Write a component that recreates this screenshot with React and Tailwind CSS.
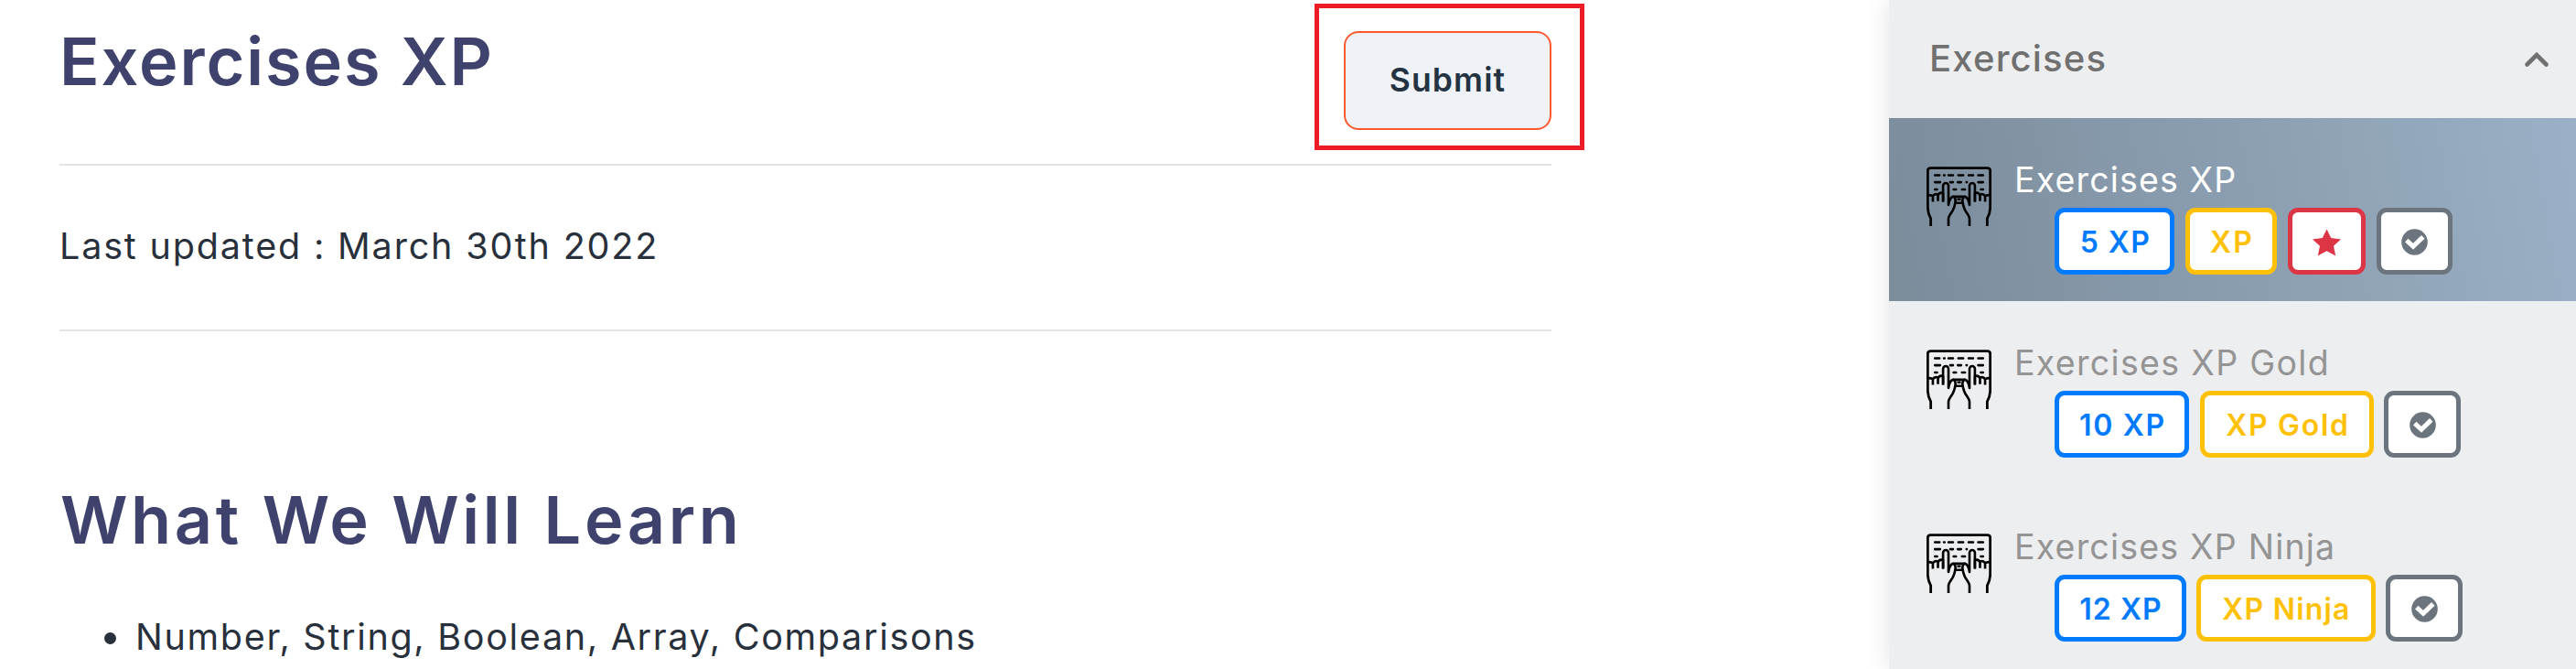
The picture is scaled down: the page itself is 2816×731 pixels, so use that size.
function TypingIcon() {
  return (
    <svg className="h-[65px] w-[71px] shrink-0" viewBox="0 0 216 198" fill="none" stroke="#000" strokeWidth="8" strokeLinejoin="round">
      <path d="M14 198V173Q5 158 4 138V14Q4 5 13 5H203Q212 5 212 14V138Q211 158 202 173V198" strokeWidth="8.5" />
      <path d="M73 198V173Q74 166 82 154Q92 142 96 118" />
      <path d="M143 198V173Q142 166 134 154Q124 142 120 118" />
      <path d="M4 95Q12 94 21 98V117M21 100Q24 89 38 93V115M38 96Q42 84 55 88V114" />
      <path d="M212 95Q204 94 195 98V117M195 100Q192 89 178 93V115M178 96Q174 84 161 88V114" />
      <path d="M55 118V64A9 9 0 0 1 73 64V128Q76 105 88 100H128Q140 105 143 128V64A9 9 0 0 1 161 64V118" />
      <path d="M88 100Q98 102 96 122M128 100Q118 102 120 122M95 121H121M102 109H114" />
      <g strokeWidth="8" strokeLinecap="round">
        <path d="M28 29H43M58 29H60M73 29H88M106 29H122M140 29H155M172 29H188" />
        <path d="M28 52H45M79 52H88M104 52H115M133 52H134M172 52H188" />
        <path d="M28 76H35M90 76H98M118 76H128M181 76H188" />
      </g>
    </svg>
  );
}

function Star() {
  return (
    <svg className="h-[30px] w-[31px]" viewBox="0 0 31 30" fill="#dc3545">
      <path d="M15.5 .5 20.2 10 31 11.4 23 18.8 25.2 29.5 15.5 24.3 5.8 29.5 8 18.8 0 11.4 10.8 10Z" />
    </svg>
  );
}

function Check() {
  return (
    <svg className="size-[29px]" viewBox="0 0 29 29">
      <circle cx="14.5" cy="14.5" r="14.3" fill="#6c757d" />
      <path d="M7.6 14.4 13 19.4 22 10.6" fill="none" stroke="#fff" strokeWidth="5" strokeLinecap="square" strokeLinejoin="miter" />
    </svg>
  );
}

function Badge({ className, children }) {
  return (
    <span className={`box-border flex h-[73px] shrink-0 items-center justify-center rounded-[11px] border-5 bg-white pt-[2px] text-[32px] font-semibold leading-none whitespace-nowrap ${className}`}>
      {children}
    </span>
  );
}

function Row({ active, title, titleClass, children }) {
  return (
    <li className={`flex items-start pl-[41px] pt-[53px] ${active ? "h-[200px] bg-[linear-gradient(80deg,#7b8c9b_0%,#8395a5_25%,#8a9db0_48%,#91a5b6_70%,#93a7bc_76%,#9bb0c6_100%)] text-white" : "h-[201px] text-[#949494]"}`}>
      <TypingIcon />
      <div className="ml-[25px]">
        <div className={`h-[46px] -mt-[8px] text-[37.5px] font-normal leading-[46px] whitespace-nowrap ${titleClass}`}>{title}</div>
        <div className="mt-[7px] ml-[44px] flex">{children}</div>
      </div>
    </li>
  );
}

export default function App() {
  return (
    <div className="flex h-[731px] w-[2816px] overflow-hidden bg-white font-['Inter',sans-serif]">
      <main className="w-[2065px] shrink-0 pl-[65px] text-[#28303c]">
        <header className="flex h-[179px] w-[1667px] justify-between">
          <h1 className="pt-[31px] text-[72px] font-semibold leading-[72px] tracking-[1.95px] text-[#3f426d]">Exercises XP</h1>
          <div className="mt-[4px] box-border h-[160px] w-[295px] border-5 border-[#ed1c24] pt-[25px] pl-[27px]">
            <button className="flex h-[108px] w-[227px] items-center justify-center rounded-[16px] border-2 border-[#ff5a30] bg-[#eff2f7] text-[35.5px] font-semibold leading-none tracking-[1.1px] text-[#243342]">Submit</button>
          </div>
        </header>
        <hr className="w-[1631px] border-t-2 border-[#e5e5e5]" />
        <p className="mt-[63.5px] h-[48px] text-[39.5px] font-normal leading-[48px] tracking-[1.83px]">Last updated : March 30th 2022</p>
        <hr className="mt-[67.5px] w-[1631px] border-t-2 border-[#e5e5e5]" />
        <h2 className="mt-[169.5px] ml-px text-[72px] font-semibold leading-[72px] tracking-[3.65px] text-[#3f426d]">What We Will Learn</h2>
        <ul className="mt-[68.5px]">
          <li className="flex h-[48px] items-center pl-[49px] text-[39.5px] font-normal leading-[48px] tracking-[1.69px] whitespace-nowrap">
            <span className="mt-[3px] mr-[21px] size-[13px] rounded-full bg-[#28303c]" />
            Number, String, Boolean, Array, Comparisons
          </li>
        </ul>
      </main>
      <aside className="w-[751px] shrink-0 bg-[#edeef0] shadow-[0_0_26px_rgba(0,0,0,0.11)]">
        <div className="flex h-[129px] items-center justify-between pr-[29px] pb-[2px] pl-[44px] text-[#707070]">
          <span className="text-[40px] font-medium leading-[48px] tracking-[1.2px]">Exercises</span>
          <svg className="mt-[2px] h-[18px] w-[28px]" viewBox="0 0 28 18" fill="none" stroke="currentColor" strokeWidth="4.6" strokeLinecap="round" strokeLinejoin="miter">
            <path d="M3.5 14.5 14 4 24.5 14.5" />
          </svg>
        </div>
        <ul>
          <Row active title="Exercises XP" titleClass="tracking-[1.15px]">
            <Badge className="w-[131px] border-[#007bff] pl-[2px] tracking-[1.4px] text-[#007bff]">5 XP</Badge>
            <Badge className="ml-[12px] w-[100px] border-[#ffc107] pl-[2px] tracking-[2.2px] text-[#ffc107]">XP</Badge>
            <Badge className="ml-[12px] w-[85px] border-[#dc3545]"><Star /></Badge>
            <Badge className="ml-[12px] w-[83px] border-[#6c757d]"><Check /></Badge>
          </Row>
          <Row title="Exercises XP Gold" titleClass="tracking-[1.32px]">
            <Badge className="w-[147px] border-[#007bff] pl-[2px] tracking-[1.7px] text-[#007bff]">10 XP</Badge>
            <Badge className="ml-[12px] w-[190px] border-[#ffc107] pl-[2px] tracking-[1.7px] text-[#ffc107]">XP Gold</Badge>
            <Badge className="ml-[11px] w-[84px] border-[#6c757d]"><Check /></Badge>
          </Row>
          <Row title="Exercises XP Ninja" titleClass="tracking-[1.2px]">
            <Badge className="w-[144px] border-[#007bff] pl-[1px] tracking-[1.1px] text-[#007bff]">12 XP</Badge>
            <Badge className="ml-[11px] w-[196px] border-[#ffc107] pl-[1px] tracking-[1.2px] text-[#ffc107]">XP Ninja</Badge>
            <Badge className="ml-[11px] w-[84px] border-[#6c757d]"><Check /></Badge>
          </Row>
        </ul>
      </aside>
    </div>
  );
}
